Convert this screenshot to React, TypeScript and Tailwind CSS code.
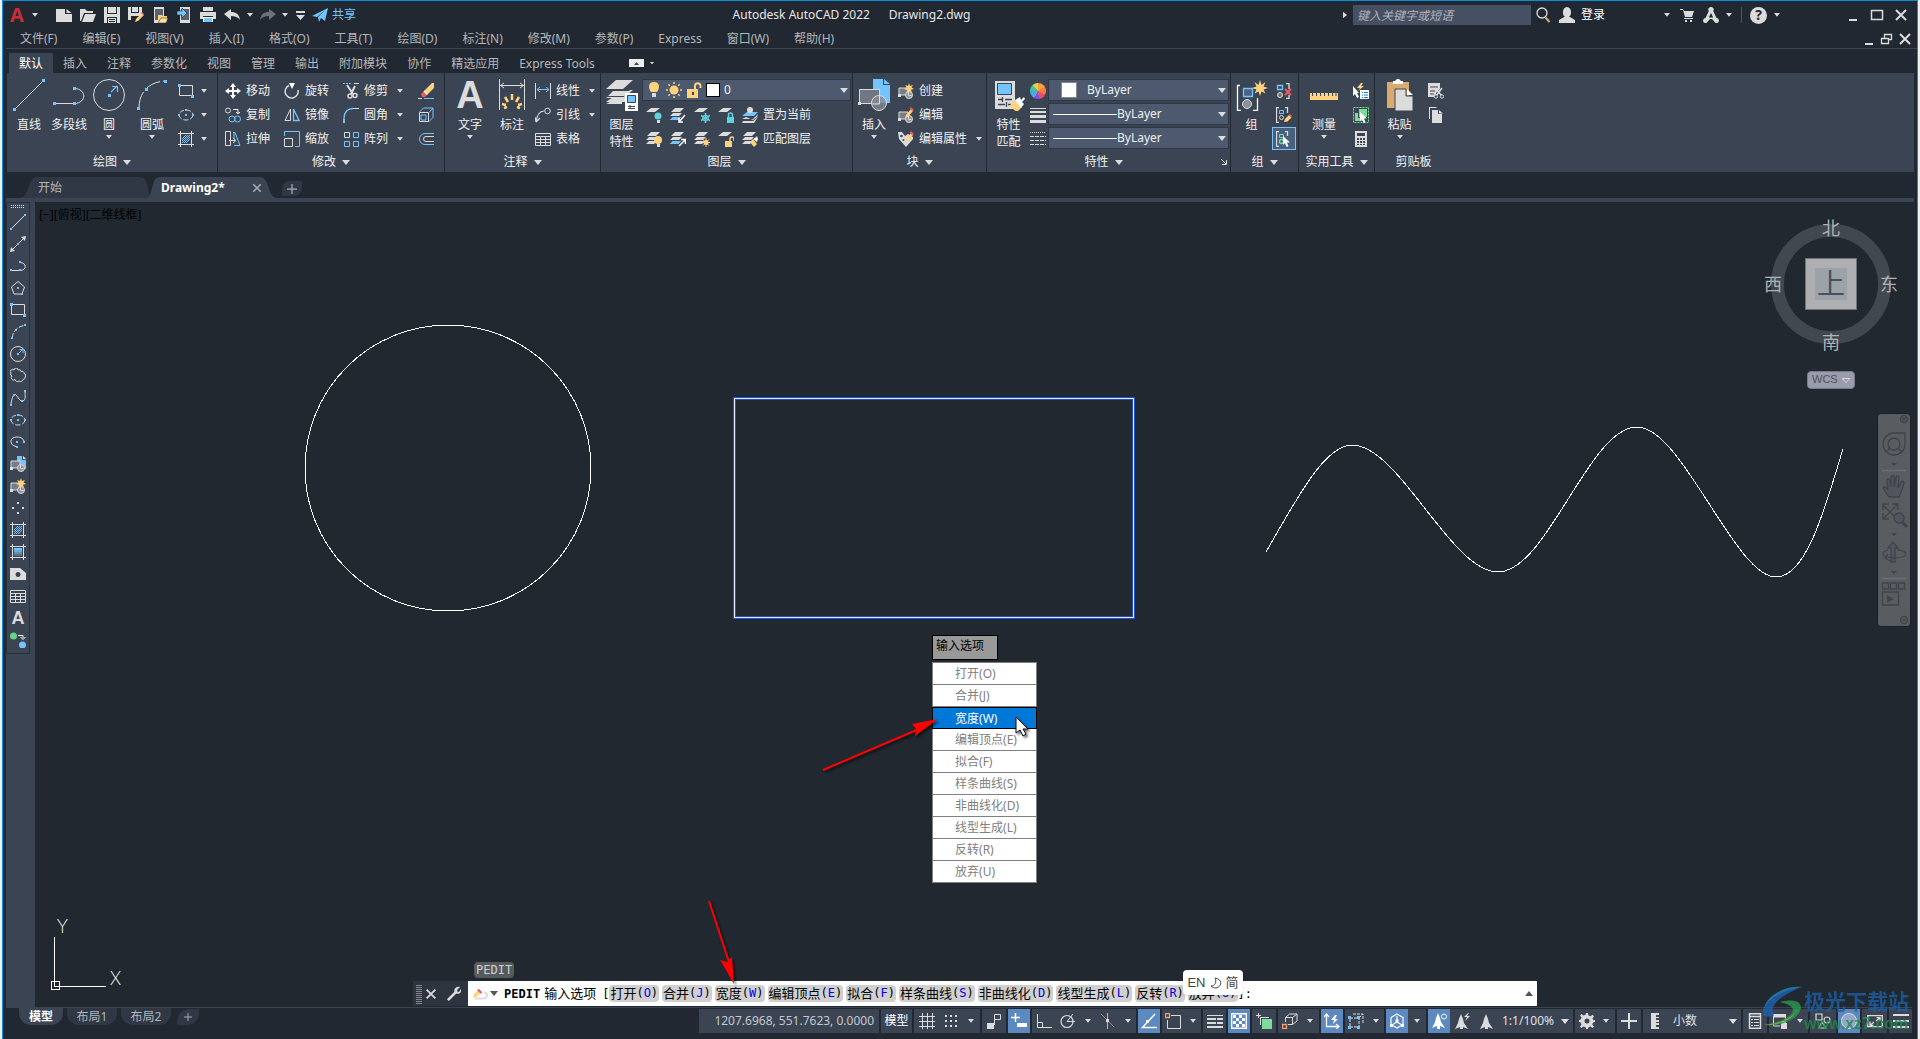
import React from 'react';

const W = '#dcdcdc';
const B = '#74c4ff';
const Y = '#ffd27d';
const T = '#5fd3dc';
const R = '#f0585a';
const G = '#7ddc9b';
const D = '#3b4453';

const stack = <path d="M5 1h9l-4 4H1zM3 6h9l-3 3H0zM3 10h8l-3 3H0z" fill={W} />;
const blockBase = <>
    <path d="M1 5h9v7H1z" fill="#777c88" stroke={W} />
    <path d="M0 11h3v3H0z" fill={W} />
    <circle cx="11" cy="12" r="3.5" fill="#8d929d" stroke={W} />
    <path d="M10.500 9v3.500h3" stroke={W} fill="none" />
  </>;
const pencil = <>
    <path d="M8 8l5-6 2 2-5 6-3 1z" fill={Y} />
    <path d="M13 0l3 3-1.500 1.500-3-3z" fill={R} />
  </>;
const spark = <path d="M11 0l1 3 3-1-1.500 2.500L16 6l-3 .8L14 10l-3-1.800L8.500 10 9 7 6 6l2.600-1.500L7 2l3 1z" fill={Y} />;
const cursor = <path d="M7 5v9l2-2 1.500 4 2-.8L11 11.500h3z" fill="#fff" />;
const hatchFrame = <path d="M2.500 0v16M13.500 0v16M0 2.500h16M0 13.500h16" stroke={W} fill="none" />;

const icons: Record<string, React.ReactNode> = {
  file: <path d="M0 2h9v5h7v8H0zM10.500 2l5 4h-5z" fill={W} />,
  open: <path d="M0 14V2h5l2 2h6v2H4L1 14zM5 7h11l-3 8H2z" fill={W} />,
  save: <>
      <path d="M0 0h16v16H0z" fill={W} />
      <path d="M3 0h10v7H3zM3 10h10v6H3z" fill="#222831" />
      <path d="M4 0h8v6H4zM4 11h8v5H4z" fill={W} />
      <path d="M5 12h6v1H5zM5 14h6v1H5z" fill="#222831" />
    </>,
  saveAs: <>
      <path d="M0 0h14v9H9v4H0z" fill={W} />
      <path d="M3 0h8v6H3zM3 9h6v4H3z" fill="#222831" />
      <path d="M4 0h6v5H4z" fill={W} />
      <path d="M7 15l1-3 6-6 2 2-6 6z" fill={Y} />
      <path d="M13 6l1-1 2 2-1 1z" fill={R} />
    </>,
  mobileOpen: <>
      <path d="M2 0h10v16H2z" fill={W} />
      <path d="M3 2h8v11H3z" fill="#5c626d" />
      <path d="M6 8h4l1 1h4v6H6z" fill={Y} />
      <path d="M9 11h7l-2 5H6z" fill="#ffe0a0" stroke="#222831" strokeWidth=".5" />
    </>,
  mobileSave: <>
      <path d="M4 0h10v16H4z" fill={W} />
      <path d="M5 2h8v11H5z" fill="#5c626d" />
      <path d="M1 4h5V1l5 5-5 5V8H1z" fill={B} stroke="#222831" strokeWidth=".6" />
    </>,
  print: <>
      <path d="M3 0h10v4H3zM0 5h16v7h-3V9H3v3H0z" fill={W} />
      <path d="M3 10h10v5H3z" fill="#fff" />
      <path d="M4 11h8v4H4z" fill={B} />
    </>,
  undo: <path d="M0 7l7-5v3c5 0 8 2 9 8-2-3-5-4-9-4v4z" fill={W} />,
  redo: <path d="M16 7L9 2v3C4 5 1 7 0 13c2-3 5-4 9-4v4z" fill="#6c727c" />,
  customize: <path d="M4 4h9v2H4zM4 8h9l-4.500 5z" fill={W} />,
  plane: <path d="M0 9L16 1l-3 13-4-3-2 4-1-5 7-7-8 7z" fill={B} />,
  search: <>
      <circle cx="7" cy="6" r="5" fill="none" stroke={W} strokeWidth="1.300" />
      <path d="M10.500 10.500l4 4.500" stroke="#d9ab72" strokeWidth="2" />
    </>,
  person: <path d="M8 0c5 0 5 9 2 9.500L16 13v3H0v-3l6-3.500C3 9 3 0 8 0z" fill={W} />,
  cart: <path d="M1 2h3l1 2h10l-2 6H6L4 3H1zM5 11h9v1H5zM6 13h2v2H6zM11 13h2v2h-2z" fill={W} />,
  adsk: <path d="M8 0a2.500 2.500 0 0 1 2.200 4l3.300 7a2.500 2.500 0 1 1-2.300 3.600L9 12H7l-2.200 2.600A2.500 2.500 0 1 1 2.500 11l3.300-7A2.500 2.500 0 0 1 8 0zM8 6l-2.200 4.500h4.400z" fill={W} fillRule="evenodd" />,
  min: <path d="M4 12h8v2H4z" fill={W} />,
  max: <path d="M2.500 3.500h11v9h-11z" fill="none" stroke={W} strokeWidth="1.500" />,
  restore: <path d="M2.500 7.500h7v5h-7zM5.500 7V3.500h7v5H10M2 7.500h8M5 3.500h8" fill="none" stroke={W} strokeWidth="1.300" />,
  close: <path d="M3 3l10 10M13 3L3 13" stroke={W} strokeWidth="2" />,
  rect: <>
      <path d="M1.500 2.500h13v10h-13z" fill="none" stroke={W} />
      <path d="M0 1h3v3H0zM13 12h3v3h-3z" fill={B} />
    </>,
  ellipse: <>
      <ellipse cx="8" cy="8" rx="7" ry="5" fill="none" stroke={W} strokeDasharray="5 2" />
      <path d="M7 2h2v2H7zM0 7h2v2H0zM7 7h2v2H7zM14 7h2v2h-2z" fill={B} />
    </>,
  hatch: <>
      {hatchFrame}
      <path d="M4 8l4-4M4 12l8-8M8 12l4-4M4 10l6-6M6 12l6-6" stroke={B} />
    </>,
  move: <path d="M8 0l3 4H9v3h3V5l4 3-4 3V9H9v3h2l-3 4-3-4h2V9H4v2L0 8l4-3v2h3V4H5z" fill="#fff" />,
  rotate: <>
      <path d="M5 2.500A6.500 6.500 0 1 0 14 7" fill="none" stroke={W} strokeWidth="1.500" />
      <path d="M5 0h6L8 6z" fill="#fff" />
    </>,
  trim: <>
      <path d="M0 .5h9" stroke={B} strokeDasharray="2 1" />
      <path d="M11 .5h5" stroke={W} />
      <path d="M4 2l6 9M12 3l-4 8" stroke={W} strokeWidth="2" />
      <circle cx="7" cy="13" r="2" fill="none" stroke={W} strokeWidth="1.500" />
      <circle cx="12" cy="12.500" r="2" fill="none" stroke={W} strokeWidth="1.500" />
    </>,
  erase: <>
      <path d="M0 15.500h4" stroke={W} />
      <path d="M6 15.500h10" stroke={B} />
      <path d="M6 8l8-8h2v5l-7 7z" fill={Y} />
      <path d="M3 11l3-3 3 4-2 2H4z" fill={R} />
      <path d="M5.500 8.500l1-1 3 3.500-1 1z" fill="#fff" />
    </>,
  copy: <>
      <circle cx="3" cy="3.500" r="2.500" fill="none" stroke={W} />
      <path d="M8 2.500h5V7M11 5l2 2 2-2" fill="none" stroke="#fff" />
      <circle cx="7" cy="12" r="3" fill="none" stroke={B} />
      <circle cx="12.500" cy="12" r="3" fill="none" stroke={B} />
    </>,
  mirror: <>
      <path d="M6.500 2v11.500H1z" fill="none" stroke={W} />
      <path d="M9.500 2v11.500H15z" fill="none" stroke={B} strokeWidth="1.300" />
    </>,
  fillet: <>
      <path d="M1 16v-5C1 5 5 1.500 10 1.500" fill="none" stroke={B} strokeWidth="1.300" />
      <path d="M10 1.500h6M1 12v4" stroke={W} />
    </>,
  box: <>
      <path d="M1.500 5.500h9v9h-9z" fill="none" stroke={W} />
      <path d="M1.500 5l4-4h9.500l-4 4.500M11 14.500l4-4V1M3 8h5v5H3z" fill="none" stroke={B} />
    </>,
  stretch: <>
      <path d="M.5.500h5v14h-5zM4 9.500h6M8 7l3 2.500L8 12" fill="none" stroke={W} />
      <path d="M8 1.500h2L15 14.500H9M9 2v6" fill="none" stroke={B} />
    </>,
  scale: <>
      <path d="M.5 7.500h8v8h-8z" fill="none" stroke={W} />
      <path d="M.5 5V.5h15v15H11" fill="none" stroke={B} />
    </>,
  array: <>
      <path d="M1.500 1.500h5v5h-5z" fill="none" stroke={W} />
      <path d="M10.500 1.500h5v5h-5zM1.500 10.500h5v5h-5zM10.500 10.500h5v5h-5z" fill="none" stroke={B} />
    </>,
  offset: <>
      <path d="M16 2.500H7a5.500 5.500 0 0 0 0 11h9" fill="none" stroke={B} />
      <path d="M16 5.500H8a2.500 2.500 0 0 0 0 5h8" fill="none" stroke={W} />
    </>,
  linear: <>
      <path d="M.5 0v16M15.500 0v16" stroke={W} />
      <path d="M2 6.500h12M5 4L2 6.500 5 9M11 4l3 2.500L11 9" stroke={B} fill="none" />
    </>,
  leader: <>
      <path d="M1 15C2 8 5 4 9 4M1 15l-1-5M1 15l4-4" stroke={W} fill="none" strokeWidth="1.200" />
      <circle cx="12.500" cy="4" r="2.800" stroke={W} fill="none" />
    </>,
  table: <path d="M.5 2.500h15v12H.5zM0 5.500h16M0 8.500h16M0 11.500h16M5.500 5v10M10.500 5v10" stroke={W} fill="none" />,
  bulb: <>
      <path d="M8 0c6 0 6 6 3 10H5C2 6 2 0 8 0z" fill={Y} />
      <path d="M6 11h4v4H6z" fill={W} />
    </>,
  sun: <>
      <circle cx="8" cy="8" r="4.500" fill={Y} />
      <path d="M8 0v2M8 14v2M0 8h2M14 8h2M2.300 2.300l1.500 1.500M12.200 12.200l1.500 1.500M2.300 13.700l1.500-1.500M12.200 3.800l1.500-1.500" stroke={Y} strokeWidth="1.500" />
    </>,
  unlock: <>
      <path d="M1 7h11v9H1z" fill={Y} />
      <path d="M9 8V4a2.500 2.500 0 0 1 5.500 0v2" fill="none" stroke={Y} strokeWidth="2" />
      <path d="M6 10h2v3H6z" fill={D} />
    </>,
  layerOff: <>
      <path d="M5 1h9L9 5H0z" fill={W} />
      <circle cx="12" cy="9" r="3.500" fill={T} />
      <path d="M11 13h3v3h-3z" fill={W} />
    </>,
  layerIso: <>
      {stack}
      <path d="M3 10h8l-3 3H0z" fill={B} />
      <path d="M15 8l-6 7M9 11v4h4" stroke="#fff" strokeWidth="1.500" fill="none" />
    </>,
  layerFreeze: <>
      <path d="M5 1h9L9 5H0z" fill={W} />
      <path d="M11.500 6v10M7 8.500l9 5M7 13.500l9-5" stroke={T} strokeWidth="1.500" />
      <circle cx="11.500" cy="11" r="3" fill="none" stroke={T} />
    </>,
  layerLock: <>
      <path d="M5 1h9L9 5H0z" fill={W} />
      <path d="M9 10h7v6H9z" fill={T} />
      <path d="M10.500 10V8a2 2 0 0 1 4 0v2" fill="none" stroke={T} strokeWidth="1.500" />
    </>,
  layerCurrent: <>
      <path d="M5 5h11l-4 4H0z" fill={B} />
      <circle cx="8" cy="3" r="3" fill={W} />
      <path d="M4 10l-4 2h11l5-5-1 3-4 3zM1 14h10l5-4-4 6H0z" fill={W} />
    </>,
  layerOn: <>
      {stack}
      <circle cx="12" cy="9" r="4" fill={Y} />
      <path d="M11 13h3v3h-3z" fill={W} />
    </>,
  layerUniso: <>
      {stack}
      <path d="M3 10h8l-3 3H0z" fill={B} />
      <path d="M9 15l6-6M11 8.500h4.500V13" stroke="#fff" strokeWidth="1.500" fill="none" />
    </>,
  layerThaw: <>
      {stack}
      <circle cx="12" cy="11.500" r="2.500" fill={Y} />
      <path d="M12 7v9M7.500 11.500H16M9 8.500l6 6M9 14.500l6-6" stroke={Y} />
    </>,
  layerUnlock: <>
      <path d="M5 1h9L9 5H0z" fill={W} />
      <path d="M7 10h7v6H7z" fill={Y} />
      <path d="M12 10V8a2 2 0 0 1 4 0v2" fill="none" stroke={Y} strokeWidth="1.500" />
    </>,
  layerMatch: <>
      {stack}
      <path d="M8 11l3-3 4 5-3 3z" fill={Y} />
      <path d="M11 8l2-1 2-2 1 3-1 3z" fill="#fff" />
    </>,
  create: <>{blockBase}{spark}</>,
  edit: <>{blockBase}{pencil}</>,
  editAttr: <>
      <path d="M0 1h4l3 4 3-2 5 3v2l-7 8-7-8z" fill={W} />
      <circle cx="3.500" cy="5" r="1.300" fill={D} />
      <circle cx="5.500" cy="9" r="1" fill={D} />
      {pencil}
    </>,
  weights: <path d="M0 1h16v1H0zM0 4h16v2H0zM0 8h16v3H0zM0 13h16v3H0z" fill={W} />,
  types: <>
      <path d="M0 1.500h16" stroke={W} strokeDasharray="1 1" />
      <path d="M0 5.500h16M0 9.500h16M0 13.500h16" stroke={W} strokeDasharray="4 1" />
    </>,
  ungroup: <>
      <path d="M1.500 2.500h5v4h-5z" stroke={B} fill="none" strokeWidth="1.300" />
      <circle cx="4" cy="12" r="2.500" fill="#777" stroke={W} />
      <path d="M10 .5h3V6M13 12v3.500h-3" stroke={W} fill="none" strokeWidth="1.300" />
      <path d="M9 6l6 6M15 6l-6 6" stroke={R} strokeWidth="2" />
    </>,
  groupEdit: <>
      <path d="M3 .5H.5v15H3M9 .5h2.500V6" stroke={W} fill="none" strokeWidth="1.300" />
      <path d="M3.500 3.500h4v3h-4z" stroke={B} fill="none" />
      <circle cx="5.500" cy="10.500" r="2" fill="none" stroke={W} />
      <path d="M8 15l1-3 4-4 2.500 2.500-4 4z" fill={Y} />
      <path d="M12.500 8L14 7l2 2-1 1.500z" fill={R} />
    </>,
  groupSelect: <>
      <path d="M3 .5H.5v15H3M9 .5h2.500V5" stroke={W} fill="none" strokeWidth="1.300" />
      <path d="M3.500 3.500h4v3h-4z" stroke={G} fill="none" />
      <circle cx="5.500" cy="10.500" r="2" fill="none" stroke={G} strokeWidth="1.300" />
      {cursor}
    </>,
  quickSelect: <>
      <path d="M7 7h9v9H7z" fill="#fff" />
      <path d="M9 9h1v1H9zM11 9h4v1h-4zM9 11.500h1v1H9zM11 11.500h4v1h-4zM9 14h1v1H9zM11 14h4v1h-4z" fill="#1e78c8" />
      <path d="M8 0L4 5h3L5 8l6-5H8l2-3z" fill={Y} />
      <path d="M0 3v10l2-2 2 4 2-1-2-4h2z" fill="#fff" />
    </>,
  selectAll: <>
      <path d="M.5.500h15v15H.5z" fill="none" stroke={G} strokeDasharray="2 1" />
      <path d="M6 2h8v8H6zM2 6h3v5h5v3H2z" fill={G} />
      {cursor}
    </>,
  calc: <>
      <path d="M2 0h12v16H2z" fill={W} />
      <path d="M4 2h8v3H4zM4 7h2v2H4zM7 7h2v2H7zM10 7h2v2h-2zM4 10h2v2H4zM7 10h2v2H7zM10 10h2v2h-2zM4 13h2v1H4zM7 13h2v1H7zM10 13h2v1h-2z" fill={D} />
    </>,
  cut: <>
      <path d="M0 0h12v6l-4 4v4H0z" fill={W} />
      <path d="M2 4h8M2 8h5M2 11h4" stroke={D} />
      <path d="M7 5l7 8M14 5l-6 8" stroke={W} strokeWidth="1.500" />
      <circle cx="8" cy="13.500" r="1.700" fill={D} stroke={W} />
      <circle cx="14" cy="13.500" r="1.700" fill={D} stroke={W} />
    </>,
  copyClip: <>
      <path d="M1 0h7l1 1H2v11H1z" fill={W} />
      <path d="M4 3h6v4h4v9H4zM11 3l4 3.500h-4z" fill={W} />
    </>,
  line: <>
      <path d="M1 15L15 1" stroke={W} />
      <path d="M0 14h2v2H0zM14 0h2v2h-2z" fill={B} />
    </>,
  xline: <>
      <path d="M2 14L14 2" stroke={W} />
      <path d="M0 16l1-5 4 4zM16 0l-1 5-4-4z" fill={W} />
      <path d="M7 7h2v2H7z" fill={B} />
    </>,
  pline: <>
      <path d="M2 12.500h8M10 4.500c7 0 7 8 0 8" stroke={W} fill="none" />
      <path d="M0 11h2v2H0zM9 3h2v2H9zM9 11h2v2H9z" fill={B} />
    </>,
  polygon: <>
      <path d="M8 1.500L14.500 7 12 14H4L1.500 7z" stroke={W} fill="none" />
      <path d="M7 7h2v2H7zM11 13h2v2h-2z" fill={B} />
    </>,
  arc: <>
      <path d="M2 14C3 7 8 2 15 1.500" stroke={W} fill="none" strokeDasharray="5 1.500" />
      <path d="M1 13h2v2H1zM5 5h2v2H5zM14 0h2v2h-2z" fill={B} />
    </>,
  circle: <>
      <circle cx="8" cy="8" r="7.500" stroke={W} fill="none" />
      <path d="M9 7l3-3M9.500 3.500H13V7" stroke={B} fill="none" />
      <path d="M7 7h2v2H7z" fill={B} />
    </>,
  cloud: <path d="M1 5a2 2 0 0 1 3-3 2 2 0 0 1 4 0 2 2 0 0 1 3 1.500 2 2 0 0 1 3 2 2 2 0 0 1 1 3.500 2 2 0 0 1-2 2.500 2.500 2.500 0 0 1-4 1.500 2.500 2.500 0 0 1-4-1.500A2 2 0 0 1 2 8a2 2 0 0 1-1-3z" stroke={W} fill="none" />,
  spline: <>
      <path d="M1 14C2 7 4 3 6 5s4 7 7 6 2-6 2-9" stroke={W} fill="none" />
      <path d="M0 14h2v2H0zM3 4h2v2H3zM11 10h2v2h-2zM14 0h2v2h-2z" fill={B} />
    </>,
  ellArc: <>
      <path d="M6 12.500C-1 11-1 3 7 3c4 0 7 2 7 5" stroke={W} fill="none" />
      <path d="M6 7h2v2H6zM13 7h2v2h-2zM6 12h2v2H6z" fill={B} />
    </>,
  insert: <>
      <path d="M7 0h5v4h4v9H7z" fill={B} />
      <path d="M13 0l3 3h-3z" fill="#fff" />
      {blockBase}
    </>,
  point: <path d="M7 2h2v2H7zM2 7h2v2H2zM12 7h2v2h-2zM7 12h2v2H7z" fill={W} />,
  gradient: <>
      {hatchFrame}
      <path d="M4 4h8v2H4z" fill="#74c4ff" />
      <path d="M4 6h8v2H4z" fill="#68aada" />
      <path d="M4 8h8v2H4z" fill="#6090b4" />
      <path d="M4 10h8v2H4z" fill="#606f82" />
    </>,
  region: <path d="M0 2h10l6 5v7H0zM8 6a2.500 2.500 0 1 0 .1 0z" fill={W} fillRule="evenodd" />,
  addSel: <>
      <circle cx="3.500" cy="4" r="3.500" fill="#62d483" />
      <circle cx="12.500" cy="13" r="3.500" fill={B} />
      <path d="M8 3.500h5V6M10.500 5l2.500 2.500L15.500 5" stroke="#fff" fill="none" />
    </>,
  wrench: <path d="M15 1l-3 3v2h2l2-3c1 4-2 6-5 5l-8 8-2-2 8-8C8 3 11 0 15 1z" fill={W} />,
  grid: <path d="M3.500 0v16M8.500 0v16M13.500 0v16M0 3.500h16M0 8.500h16M0 13.500h16" stroke={W} />,
  snap: <path d="M2 2h2v2H2zM7 2h2v2H7zM12 2h2v2h-2zM2 7h2v2H2zM7 7h2v2H7zM12 7h2v2h-2zM2 12h2v2H2zM7 12h2v2H7zM12 12h2v2h-2z" fill={W} />,
  infer: <>
      <path d="M8.500 1.500h6v5h-6zM8.500 6v6" fill="none" stroke={W} />
      <path d="M1 10h7v6H1z" fill={W} />
    </>,
  dyn: <>
      <path d="M4.500 0v9M0 4.500h9" stroke="#fff" strokeWidth="1.500" />
      <path d="M6 10h10v4H6z" fill="#fff" />
    </>,
  ortho: <path d="M1.500 1v13.500H16M1.500 9.500h5v5" fill="none" stroke={W} />,
  polar: <>
      <circle cx="7" cy="8.500" r="6" fill="none" stroke={W} strokeWidth="1.200" />
      <path d="M15 8.500H7L13 1" fill="none" stroke={W} />
    </>,
  iso: <>
      <path d="M1 1l13 13" stroke="#e07070" />
      <path d="M7.500 0v16" stroke={G} />
      <path d="M6 6h3v3H6z" fill={W} />
    </>,
  track: <>
      <path d="M14 1L1.500 14.500H16" fill="none" stroke="#fff" strokeWidth="1.500" />
      <path d="M5 7h3v3H5z" fill="#fff" />
    </>,
  osnap: <>
      <path d="M6 2.500h9.500v13h-13V7" fill="none" stroke={W} />
      <path d="M.5.500h4v4h-4z" fill="none" stroke="#f0a070" strokeWidth="1.300" />
    </>,
  lwt: <path d="M0 2h16v1H0zM0 5h9v2H0zM10 5h6v2h-6zM0 9h9v2H0zM10 9h6v2h-6zM0 13h16v2H0z" fill={W} />,
  transp: <>
      <path d="M.7.700h14.600v14.600H.7z" fill="none" stroke="#fff" strokeWidth="1.400" />
      <path d="M2 2h3v3H2zM8 2h3v3H8zM5 5h3v3H5zM11 5h3v3h-3zM2 8h3v3H2zM8 8h3v3H8zM5 11h3v3H5zM11 11h3v3h-3z" fill="#fff" />
    </>,
  cycle: <>
      <path d="M2.500 0v5M0 2.500h5M5 4.500h8M4.500 4v8" stroke={W} fill="none" />
      <path d="M6 6h10v10H6z" fill={G} />
    </>,
  osnap3d: <>
      <path d="M3.500 9V4.500h7v7H6M3.500 4.500l4-3.500H15v7l-4.500 3.500M10.500 4.500L15 1" fill="none" stroke={W} />
      <path d="M.5 11.500h4v4h-4z" fill="none" stroke="#f0a070" strokeWidth="1.300" />
    </>,
  ducs: <>
      <path d="M2.500 14V2M2 13.500h12M0 4l2.500-3L5 4M12 11l3 2.500-3 2.500" fill="none" stroke="#fff" strokeWidth="1.300" />
      <path d="M11 2L7 7h3l-1 4 5-5h-3l2-4z" fill="#fff" />
    </>,
  filter: <>
      <path d="M2 5h9v9H2zM5 1h10v10M11 5l4-4" fill="none" stroke={W} strokeDasharray="3 1" />
      <path d="M0 3h3v3H0zM9 3h3v3H9zM0 13h3v3H0zM9 13h3v3H9z" fill={B} />
    </>,
  gizmo: <>
      <path d="M8 1l6 3.500v7L8 15l-6-3.500v-7zM8 3v6l-5 3M8 9l5 3" fill="none" stroke="#fff" strokeWidth="1.200" />
      <path d="M6.500 6.500h3v3h-3zM1 11h3v3H1zM12 11h3v3h-3z" fill="#fff" />
    </>,
  annoVis: <>
      <path d="M7 0l2 5 1 4 4 6-5-2v3H6v-3l-5 2 3-6 1-4z" fill="#fff" />
      <circle cx="13" cy="3.500" r="2.500" fill="none" stroke="#fff" />
    </>,
  annoAuto: <path d="M7 1l2 5 1 4 4 6-5-2v2H6v-2l-5 2 3-6 1-4zM14 0l-4 4h3l-2 4 5-5h-3l2-3z" fill={W} />,
  anno: <path d="M8 1l2 5 1 4 4 6-5-2v2H7v-2l-5 2 3-6 1-4z" fill={W} />,
  gear: <>
      <path d="M7 0h2l.5 2.500 2 .8 2-1.500 1.500 1.500-1.500 2 .8 2L16 7v2l-2 .6-.7 2L15 13.500 13.500 15l-2-1.500-2 .8L9 16H7l-.5-1.700-2-.8-2 1.500L1 13.500l1.500-2-.8-2L0 9V7l1.700-.5.800-2-1.500-2L2.500 1l2 1.500 2-.8z" fill={W} />
      <circle cx="8" cy="8" r="2.500" fill={D} />
    </>,
  plus: <path d="M7 0h2v7h7v2H9v7H7V9H0V7h7z" fill={W} />,
  ruler: <path d="M4 0h8v2H9v2h3v1H9v2h3v2H9v1h3v2H9v2h3v2H4z" fill={W} />,
  qprops: <>
      <path d="M2.500.700h11v14.600h-11zM2 3.500h12" fill="none" stroke={W} strokeWidth="1.500" />
      <path d="M4 6h2v1H4zM7 6h5v1H7zM4 9h2v1H4zM7 9h5v1H7zM4 12h2v1H4zM7 12h5v1H7z" fill={W} />
    </>,
  lockUi: <>
      <path d="M1 1h13v3H1z" fill={W} />
      <path d="M1.500 2v11H8M13.500 2v5M1 4h13" fill="none" stroke={W} />
      <path d="M9 10h6v6H9zM10 10V8h4v2" fill={W} />
    </>,
  isolate: <>
      <path d="M1 1h6v6H1zM7 9l4 6H4z" fill="none" stroke={W} strokeWidth="1.200" />
      <circle cx="12" cy="7" r="3" fill="none" stroke={W} strokeWidth="1.200" />
    </>,
  hw: <circle cx="8" cy="8" r="7.500" fill="#93a8c8" stroke={W} />,
  clean: <path d="M.7 2.700h14.600v11H.7zM9 8l3.500-3M9.500 4.700H13V8M7 9l-3.500 3M3 8.500v3.800h3.500" fill="none" stroke={W} strokeWidth="1.300" />,
  menu: <path d="M0 1h16v2H0zM0 7h16v2H0zM0 13h16v2H0z" fill={W} />
};

const bigIcons: Record<string, React.ReactNode> = {
  line: <>
      <path d="M3 29L30 2" stroke={W} />
      <path d="M0 29h3v3H0zM29 0h3v3h-3z" fill={B} />
    </>,
  pline: <>
      <path d="M3 24.500h18M21 9.500c13 0 13 15 0 15" stroke={W} fill="none" />
      <path d="M0 23h3v3H0zM20 8h3v3h-3zM20 23h3v3h-3z" fill={B} />
    </>,
  circle: <>
      <circle cx="16" cy="16" r="15.500" stroke={W} fill="none" />
      <path d="M18 13l6-6M19 7.500h5.500V13" stroke={B} strokeWidth="1.200" fill="none" />
      <path d="M15 15h3v3h-3z" fill={B} />
    </>,
  arc: <>
      <path d="M3 29C3 14 12 3 29 2" stroke={W} fill="none" strokeDasharray="17 3" />
      <path d="M1 28h3v3H1zM9 9h3v3H9zM28 1h3v3h-3z" fill={B} />
    </>,
  dim: <>
      <path d="M3.500 0v31M28.500 0v31M4 6.500h24M8 4L4.500 6.500 8 9M24 4l3.500 2.500L24 9" stroke={W} fill="none" />
      <path d="M16 15v6M9 18l3 5M23 18l-3 5M6 25l4 1M26 25l-4 1M11 28l-3 1M21 28l3 1" stroke={Y} strokeWidth="2.500" />
    </>,
  layers: <>
      <path d="M10 1h17L17 10H0zM7 14l-7 5h16l8-8h3l-10 8zM6 22l-6 3h16v-3z" fill={W} />
      <path d="M7 12h17l-7 6H1zM7 18h12v5H0z" fill={W} />
      <path d="M19 14h13v18H19z" fill="#fff" />
      <path d="M21.500 16.500h8v7h-8z" fill={B} stroke={D} />
      <path d="M22 27.500h7M24 26v3M22 29.500h7" stroke={D} />
      <path d="M1 11.500h17l7-6M1 17.500h17" stroke={D} fill="none" />
    </>,
  insert: <>
      <path d="M15 0h10v6h7v18H15z" fill={B} />
      <path d="M26 0l6 5h-6z" fill={B} />
      <path d="M1.500 10.500h20v14h-20z" fill="#717783" stroke={W} />
      <path d="M0 23h3v3H0z" fill={W} />
      <circle cx="21" cy="24" r="7.500" fill="#858b96" fillOpacity=".8" stroke={W} />
      <path d="M21.500 17v8h-7" fill="none" stroke={W} />
    </>,
  match: <>
      <path d="M2 2h20v28H2z" fill={W} />
      <path d="M4.500 4.500h14v11h-14z" fill={B} stroke={D} />
      <path d="M5 20.500h4M12 20.500h7M5 25.500h7M15 25.500h3M9.500 18v5M13.500 23v5" stroke={D} strokeWidth="1.300" />
      <path d="M16 27l7-6 6 7-5 5z" fill={Y} />
      <path d="M22 21l5-3 1 3 3-3 1 2-3 3 2 2-3 4z" fill="#fff" />
    </>,
  group: <>
      <path d="M4 6.500H1.500v25H5M17 31.500h4.500V19" stroke="#fff" fill="none" strokeWidth="1.300" />
      <path d="M7.500 9.500h9v8h-9z" stroke={B} fill="#4b6280" strokeWidth="1.300" />
      <circle cx="11" cy="25" r="4.500" fill="#8b909a" stroke={W} />
      <path d="M24 1l1.500 5 4-3-2 4.500L32 9l-4.500 1.500 2 4-4-2L24 17l-1.500-4.500-4 2 2-4L16 9l4.500-1.500-2-4.500 4 3z" fill={Y} />
    </>,
  measure: <>
      <path d="M2 14h28v7H2z" fill={Y} />
      <path d="M4.500 14v3M8.500 14v3M12.500 14v3M16.500 14v3M20.500 14v3M24.500 14v3M28 14v3" stroke={D} />
    </>,
  paste: <>
      <path d="M3 3h22v26H3z" fill="#d9ab72" />
      <path d="M9 2h2l2-2h2l2 2h2v3H9z" fill="#fff" />
      <path d="M11 10h11v7h7v15H11z" fill={W} stroke={D} />
      <path d="M23 10l6 6h-6z" fill="#fff" />
    </>
};

const Icon = ({ name, className = 'size-4' }: { name: string; className?: string }) =>
  <svg viewBox="0 0 16 16" className={`shrink-0 ${className}`} aria-hidden="true">{icons[name]}</svg>;

const BigIcon = ({ name }: { name: string }) =>
  <svg viewBox="0 0 32 32" className="size-8 shrink-0" aria-hidden="true">{bigIcons[name]}</svg>;

const Caret = ({ className = 'w-1.5' }: { className?: string }) =>
  <svg viewBox="0 0 8 5" className={`shrink-0 ${className}`} aria-hidden="true"><path d="M0 0h8L4 5z" fill={W} /></svg>;

const IconButton = ({ name, label, className = 'w-6' }: { name: string; label: string; className?: string }) =>
  <button aria-label={label} className={`flex h-6 shrink-0 items-center justify-center ${className}`}><Icon name={name} /></button>;

const CaretButton = ({ label, className = 'w-4' }: { label: string; className?: string }) =>
  <button aria-label={label} className={`flex h-6 shrink-0 items-center justify-center ${className}`}><Caret /></button>;

const BigButton = ({ icon, lines, caret = false, className = 'w-10', children }: {
  icon?: string;
  lines: string[];
  caret?: boolean;
  className?: string;
  children?: React.ReactNode;
}) =>
  <button className={`flex shrink-0 flex-col items-center whitespace-nowrap ${className}`}>
    <span className="flex h-[37px] flex-col">{icon ? <BigIcon name={icon} /> : children}</span>
    {lines.map(l => <span key={l} className="h-[17px] leading-[17px]">{l}</span>)}
    {caret && <span className="flex h-2 items-center"><Caret /></span>}
  </button>;

const Tool = ({ icon, label, caret = false }: { icon: string; label: string; caret?: boolean }) =>
  <button className="flex h-6 items-center gap-[5px] whitespace-nowrap">
    <Icon name={icon} />
    {label}
    {caret && <Caret className="ml-1 w-1.5" />}
  </button>;

const Panel = ({ title, className, caret = true, launcher = false, children }: {
  title: string;
  className: string;
  caret?: boolean;
  launcher?: boolean;
  children: React.ReactNode;
}) =>
  <section className={`flex shrink-0 flex-col border-r border-[#222831] ${className}`}>
    <div className="flex h-[78px] pt-1.5">{children}</div>
    <div className="flex h-[21px] items-center justify-center pt-px">
      <button className="flex flex-1 items-center justify-center gap-1.5">
        {title}
        {caret && <Caret className="w-2" />}
      </button>
      {launcher && <button aria-label="特性设置" className="w-2.5"><svg viewBox="0 0 8 8" className="size-2"><path d="M1 1l5 5M6.500 2v4.500H2" stroke={W} fill="none" /></svg></button>}
    </div>
  </section>;

const menus = ['文件(F)', '编辑(E)', '视图(V)', '插入(I)', '格式(O)', '工具(T)', '绘图(D)', '标注(N)', '修改(M)', '参数(P)', 'Express', '窗口(W)', '帮助(H)'];
const ribbonTabs = ['默认', '插入', '注释', '参数化', '视图', '管理', '输出', '附加模块', '协作', '精选应用', 'Express Tools'];
const drawTools = [
  ['line', '直线'], ['xline', '构造线'], ['pline', '多段线'], ['polygon', '多边形'], ['rect', '矩形'],
  ['arc', '圆弧'], ['circle', '圆'], ['cloud', '修订云线'], ['spline', '样条曲线'], ['ellipse', '椭圆'],
  ['ellArc', '椭圆弧'], ['insert', '插入块'], ['create', '创建块'], ['point', '点'], ['hatch', '图案填充'],
  ['gradient', '渐变色'], ['region', '面域'], ['table', '表格'], ['text', '多行文字'], ['addSel', '添加选定对象']
];
const options: [string, string][] = [
  ['打开', 'O'], ['合并', 'J'], ['宽度', 'W'], ['编辑顶点', 'E'], ['拟合', 'F'],
  ['样条曲线', 'S'], ['非曲线化', 'D'], ['线型生成', 'L'], ['反转', 'R'], ['放弃', 'U']
];

const TitleBar = () =>
  <header className="flex h-7 shrink-0 items-center">
    <button aria-label="应用程序菜单" className="flex w-[46px] shrink-0 items-center gap-2 pl-1">
      <span className="text-xl leading-6 font-bold text-[#c62f35]">A</span>
      <Caret />
    </button>
    <IconButton name="file" label="新建" />
    <IconButton name="open" label="打开" />
    <IconButton name="save" label="保存" />
    <IconButton name="saveAs" label="另存为" />
    <IconButton name="mobileOpen" label="从 Web 和 Mobile 中打开" />
    <IconButton name="mobileSave" label="保存到 Web 和 Mobile" />
    <IconButton name="print" label="打印" />
    <IconButton name="undo" label="放弃" />
    <CaretButton label="放弃列表" className="w-3" />
    <IconButton name="redo" label="重做" />
    <CaretButton label="重做列表" className="w-2.5" />
    <IconButton name="customize" label="自定义快速访问工具栏" className="w-5" />
    <button className="ml-0.5 flex w-12 shrink-0 items-center gap-1 whitespace-nowrap text-[#74c4ff]"><Icon name="plane" />共享</button>
    <h1 className="flex-1 text-center whitespace-pre text-[#e6e6e6]">Autodesk AutoCAD 2022      Drawing2.dwg</h1>
    <svg viewBox="0 0 5 8" className="mr-1.5 h-2 w-1"><path d="M0 0l5 4-5 4z" fill={W} /></svg>
    <input aria-label="搜索" placeholder="键入关键字或短语" className="h-5 w-[178px] bg-[#475063] px-1 text-xs italic outline-none placeholder:text-[#aeb3bc]" />
    <IconButton name="search" label="搜索帮助" />
    <button className="ml-1 flex w-[84px] items-center gap-1.5 whitespace-nowrap text-white"><Icon name="person" />登录</button>
    <CaretButton label="登录选项" className="ml-4 w-4" />
    <IconButton name="cart" label="Autodesk App Store" />
    <IconButton name="adsk" label="Autodesk" />
    <CaretButton label="Autodesk 选项" className="w-3" />
    <span className="mr-1 ml-1.5 h-4 w-px bg-[#4d5565]" />
    <button aria-label="帮助" className="mr-0.5 ml-1 size-[17px] rounded-full bg-[#dcdcdc] text-center text-sm leading-4 font-bold text-[#222831]">?</button>
    <CaretButton label="帮助选项" />
    <span className="w-14" />
    <IconButton name="min" label="最小化" />
    <IconButton name="max" label="最大化" />
    <IconButton name="close" label="关闭" className="mr-1 w-6" />
  </header>;

const MenuBar = () =>
  <nav className="flex h-5 shrink-0 items-center gap-[25px] border-b border-[#3b4453] pl-3.5 text-[#b4b7bc]">
    {menus.map(m => <button key={m} className="leading-4 whitespace-nowrap">{m}</button>)}
    <span className="mr-1 ml-auto flex items-center">
      <IconButton name="min" label="最小化图形" className="w-4" />
      <IconButton name="restore" label="还原图形" className="w-5" />
      <IconButton name="close" label="关闭图形" className="w-4" />
    </span>
  </nav>;

const RibbonTabs = () =>
  <nav className="flex h-6 shrink-0 items-end pl-[3px] text-[#b4b7bc]">
    {ribbonTabs.map((t, i) =>
      <button key={t} className={i === 0 ? 'h-5 bg-[#3b4453] px-2.5 pt-px text-white' : 'h-5 px-2.5 pt-px whitespace-nowrap'}>{t}</button>)}
    <button aria-label="最小化功能区" className="ml-6 flex h-5 items-center gap-1.5">
      <svg viewBox="0 0 15 8" className="h-2 w-[15px]"><path d="M0 0h15v8H0z" fill="#eee" /><path d="M5 6l2.500-3L10 6z" fill="#444" /></svg>
      <Caret className="w-1" />
    </button>
  </nav>;

const PropertySelect = ({ label, swatch = false }: { label: string; swatch?: boolean }) =>
  <span className="flex h-[22px] items-center border border-[#2f3744] bg-[#4d596e] pr-0.5">
    {swatch
      ? <span className="mr-2.5 ml-3 size-4 border border-[#888] bg-white" />
      : <span className="ml-1 h-px w-16 bg-white" />}
    <select aria-label={label} className="min-w-0 flex-1 appearance-none bg-transparent leading-5 outline-none"><option>ByLayer</option></select>
    <Caret className="w-2" />
  </span>;

const Ribbon = () =>
  <div className="mr-[3px] ml-px flex h-[99px] shrink-0 bg-[#3b4453] text-[#f0f0f0]">
    <Panel title="绘图" className="w-[211px]">
      <span className="w-0.5" />
      <BigButton icon="line" lines={['直线']} />
      <BigButton icon="pline" lines={['多段线']} />
      <BigButton icon="circle" lines={['圆']} caret />
      <BigButton icon="arc" lines={['圆弧']} caret className="w-[46px]" />
      <div className="flex flex-col pl-[3px]">
        {[['rect', '矩形'], ['ellipse', '椭圆'], ['hatch', '图案填充']].map(([n, l]) =>
          <button key={n} aria-label={l} className="flex h-6 items-center gap-[7px]"><Icon name={n} /><Caret className="w-1.5" /></button>)}
      </div>
    </Panel>
    <Panel title="修改" className="w-[227px]">
      <div className="grid grid-cols-[59px_59px_75px_16px] content-start pl-[7px]">
        <Tool icon="move" label="移动" />
        <Tool icon="rotate" label="旋转" />
        <Tool icon="trim" label="修剪" caret />
        <IconButton name="erase" label="删除" className="w-4" />
        <Tool icon="copy" label="复制" />
        <Tool icon="mirror" label="镜像" />
        <Tool icon="fillet" label="圆角" caret />
        <IconButton name="box" label="分解" className="w-4" />
        <Tool icon="stretch" label="拉伸" />
        <Tool icon="scale" label="缩放" />
        <Tool icon="array" label="阵列" caret />
        <IconButton name="offset" label="偏移" className="w-4" />
      </div>
    </Panel>
    <Panel title="注释" className="w-[156px]">
      <BigButton lines={['文字']} caret className="ml-[3px] w-11">
        <span className="font-['Liberation_Sans',sans-serif] text-[38px] leading-8 font-bold text-[#dcdcdc]">A</span>
      </BigButton>
      <BigButton lines={['标注']} icon="dim" />
      <div className="flex flex-col pl-[3px]">
        <Tool icon="linear" label="线性" caret />
        <Tool icon="leader" label="引线" caret />
        <Tool icon="table" label="表格" />
      </div>
    </Panel>
    <Panel title="图层" className="w-[252px]">
      <BigButton icon="layers" lines={['图层', '特性']} className="w-[41px]" />
      <div className="flex flex-1 flex-col pr-px">
        <span className="mb-0.5 flex h-[22px] items-center border border-[#2f3744] bg-[#4d596e] pr-0.5 pl-[3px]">
          <Icon name="bulb" className="mr-1 size-4" />
          <Icon name="sun" className="mr-1 size-4" />
          <Icon name="unlock" className="mr-1 size-4" />
          <span className="mr-1 size-3.5 border border-black bg-white" />
          <select aria-label="图层" className="min-w-0 flex-1 appearance-none bg-transparent leading-5 outline-none"><option>0</option></select>
          <Caret className="w-2" />
        </span>
        <div className="flex">
          <IconButton name="layerOff" label="关" />
          <IconButton name="layerIso" label="隔离" />
          <IconButton name="layerFreeze" label="冻结" />
          <IconButton name="layerLock" label="锁定" />
          <span className="w-1" /><Tool icon="layerCurrent" label="置为当前" />
        </div>
        <div className="flex">
          <IconButton name="layerOn" label="打开所有图层" />
          <IconButton name="layerUniso" label="取消隔离" />
          <IconButton name="layerThaw" label="解冻所有图层" />
          <IconButton name="layerUnlock" label="解锁" />
          <span className="w-1" /><Tool icon="layerMatch" label="匹配图层" />
        </div>
      </div>
    </Panel>
    <Panel title="块" className="w-[134px]">
      <BigButton icon="insert" lines={['插入']} caret className="w-[42px]" />
      <div className="flex flex-col pl-[3px]">
        <Tool icon="create" label="创建" />
        <Tool icon="edit" label="编辑" />
        <Tool icon="editAttr" label="编辑属性" caret />
      </div>
    </Panel>
    <Panel title="特性" className="w-[244px]" launcher>
      <BigButton icon="match" lines={['特性', '匹配']} className="w-[43px]" />
      <div className="flex w-[18px] flex-col">
        <button aria-label="对象颜色" className="flex h-6 items-center">
          <span className="size-4 rounded-full bg-[conic-gradient(#f9a03f_0_16%,#ff7a45_0_32%,#e8505b_0_48%,#8250e8_0_58%,#4aa8e8_0_74%,#4cc38a_0_88%,#e8d04a_0)]" />
        </button>
        <IconButton name="weights" label="线宽" className="w-4" />
        <IconButton name="types" label="线型" className="w-4" />
      </div>
      <div className="flex flex-1 flex-col gap-0.5 pr-px">
        <PropertySelect label="颜色" swatch />
        <PropertySelect label="线宽" />
        <PropertySelect label="线型" />
      </div>
    </Panel>
    <Panel title="组" className="w-[68px]">
      <BigButton icon="group" lines={['组']} className="w-[41px]" />
      <div className="flex flex-col items-center">
        <IconButton name="ungroup" label="解除编组" />
        <IconButton name="groupEdit" label="组编辑" />
        <button aria-label="启用/禁用组选择" className="flex h-[23px] w-6 items-center justify-center border border-[#74c4ff] bg-[#46607e]"><Icon name="groupSelect" /></button>
      </div>
    </Panel>
    <Panel title="实用工具" className="w-[76px]">
      <BigButton icon="measure" lines={['测量']} caret className="w-[50px]" />
      <div className="flex flex-col">
        <IconButton name="quickSelect" label="快速选择" />
        <IconButton name="selectAll" label="全部选择" />
        <IconButton name="calc" label="快速计算器" />
      </div>
    </Panel>
    <section className="flex w-[77px] flex-col">
      <div className="flex h-[78px] pt-1.5">
        <BigButton icon="paste" lines={['粘贴']} caret className="w-[49px]" />
        <div className="flex flex-col">
          <IconButton name="cut" label="剪切" />
          <IconButton name="copyClip" label="复制" />
        </div>
      </div>
      <div className="h-[21px] pt-px text-center leading-5">剪贴板</div>
    </section>
  </div>;

const FileTabs = () =>
  <nav className="mr-[3px] flex h-[30px] shrink-0 items-end border-b-4 border-[#3b4453] pl-3.5">
    <button className="relative flex h-[21px] w-[130px] items-center pl-[18px] text-[#b4b7bc]">
      <svg viewBox="0 0 130 21" className="absolute inset-0 -z-10 h-[21px] w-[130px]"><path d="M0 21C10 20 7 0 17 0H120c10 0 7 20 12 21z" fill="#303845" /></svg>
      开始
    </button>
    <div className="relative flex h-[21px] w-[124px] items-center pl-[11px] font-bold text-white">
      <svg viewBox="0 0 138 21" className="absolute inset-y-0 -left-1 -z-10 h-[21px] w-[138px]"><path d="M0 21C8 20 4 0 14 0H114c10 0 7 20 17 21z" fill="#3b4453" /></svg>
      <button className="w-[90px] text-left">Drawing2*</button>
      <button aria-label="关闭 Drawing2"><Icon name="close" className="size-3 opacity-70" /></button>
    </div>
    <button aria-label="新图形" className="mb-0.5 ml-2 flex h-[15px] w-5 items-center justify-center rounded-tl-lg rounded-br-lg bg-[#303845]"><Icon name="plus" className="size-2.5 opacity-70" /></button>
  </nav>;

const DrawToolbar = () =>
  <aside className="flex w-[29px] shrink-0 flex-col items-start bg-[#3b4453]">
    <div className="flex w-6 flex-col items-center border border-[#2a313c] pb-0.5">
      <svg viewBox="0 0 14 8" className="h-2 w-3.5"><path d="M0 2.500h14M0 4.500h14" stroke={W} strokeDasharray="1 1" /></svg>
      {drawTools.map(([n, l]) =>
        <button key={l} aria-label={l} className="flex h-[22px] w-full items-center justify-center">
          {n === 'text' ? <span className="font-['Liberation_Sans',sans-serif] text-lg leading-5 font-bold text-[#dcdcdc]">A</span> : <Icon name={n} />}
        </button>)}
    </div>
  </aside>;

const Drawing = () =>
  <svg className="absolute inset-0 h-full w-full" aria-hidden="true">
    <g fill="none" stroke="#fff" shapeRendering="crispEdges">
      <circle cx="413" cy="266" r="143" />
      <path d="M1231 350C1262 296 1290 243 1317 243C1364 243 1416 370 1463 370C1512 370 1554 225 1602 225C1647 225 1700 375 1741 375C1773 375 1792 298 1808 247" />
      <path d="M19.500 735v49h51M16.500 779.500h8v8h-8z" />
    </g>
    <g fill="none" shapeRendering="crispEdges">
      <path d="M699.500 196.500h399v219h-399z" stroke="#2450c8" strokeWidth="3" />
      <path d="M699.500 196.500h399v219h-399z" stroke="#e4ebff" strokeWidth="1" />
    </g>
    <g fill="#fff" fontFamily="Inter, sans-serif" fontSize="18" fontWeight="200" textAnchor="middle">
      <text x="27.500" y="731">Y</text>
      <text x="80.500" y="783">X</text>
    </g>
  </svg>;

const Arrows = () =>
  <svg className="pointer-events-none absolute inset-0 h-full w-full drop-shadow-[2px_2px_1px_#0008]" aria-hidden="true">
    <g fill="#f00">
      <path d="M788 568l96-41" stroke="#f00" strokeWidth="2" />
      <path d="M903 517l-26 5 4 5-1 7z" />
      <path d="M674 699l21 64" stroke="#f00" strokeWidth="2" />
      <path d="M699 782l-14-24 7 2 5-5z" />
    </g>
    <path d="M981 515v16l4-3 3 6 3-2-3-5h5z" fill="#fff" stroke="#000" />
  </svg>;

const ViewCube = () =>
  <div className="absolute top-[7px] right-4 flex w-[134px] flex-col items-center text-lg text-[#b0b2b4]">
    <div className="relative flex w-full flex-col items-center">
      <svg viewBox="0 0 134 134" className="absolute top-[8px] left-0 size-[134px]" aria-hidden="true">
        <circle cx="67" cy="67" r="53.500" fill="none" stroke="#42484f" strokeWidth="13" />
      </svg>
      <button className="relative h-[38px] leading-[36px]">北</button>
      <div className="relative flex h-[74px] w-full items-center justify-between">
        <button>西</button>
        <button className="flex size-[52px] items-center justify-center border border-[#6f7478] bg-[#adafb1]">
          <span className="size-8 bg-[#9ba3a9] text-center text-[28px] leading-[30px] text-[#4a5058]">上</span>
        </button>
        <button>东</button>
      </div>
      <button className="relative h-[42px] leading-[40px]">南</button>
    </div>
    <button className="mt-2 flex h-[18px] w-12 items-center justify-between rounded border border-[#777a88] bg-[#9a9cac] px-1 font-['Liberation_Sans',sans-serif] text-[11px] text-[#50525c]">
      WCS
      <svg viewBox="0 0 8 5" className="w-2"><path d="M0 .5h8L4 4.500z" fill="none" stroke="#d8d8e0" /></svg>
    </button>
  </div>;

const NavBar = () =>
  <div className="absolute top-[211px] right-[3px] flex h-[214px] w-[34px] flex-col rounded border border-[#1b2027] bg-[#585d61]">
    <svg viewBox="0 0 32 212" className="h-[212px] w-8" fill="none" stroke="#3f444b" strokeWidth="1.300" role="img" aria-label="导航栏">
      <circle cx="26" cy="5" r="3.500" />
      <path d="M24 3l4 4M28 3l-4 4M24 206h4" />
      <circle cx="26" cy="206" r="3.500" />
      <path d="M16 19h11v11a11 11 0 1 1-11-11z" />
      <circle cx="16" cy="30" r="6" />
      <path d="M8 38l4-4M24 38l-4-4" />
      <path d="M11 83C8 78 4 74 5 73c2-1 4 1 5 3l-1-10c1-2 3-1 3 1l1 6V63c1-2 3-2 3 0v10l2-10c1-2 3-1 3 1l-1 10 3-6c2-2 3 0 3 1-1 5-3 10-5 14z" fill="#50555f" />
      <path d="M5 91l14 14M19 91L5 105M5 96v-6h6M14 90h6v6M5 99v6h6" />
      <circle cx="21" cy="104" r="5" fill="#50555f" />
      <path d="M24 108l5 5" strokeWidth="3" />
      <path d="M13 148v-14h-3l5-6 5 6h-3v14z" fill="#50555f" />
      <path d="M10 136c-9 3-6 7 5 8 16 0 16-7 5-8M10 140l-3 4 5 3" />
      <path d="M4.500 169h6v6h-6zM12.500 169h6v6h-6zM20.500 169h6v6h-6zM4.500 178h16v13h-16z" />
      <path d="M9 181l7 4-7 4zM13 49h6l-3 3zM13 119h6l-3 3zM13 157h6l-3 3z" fill="#3f444b" stroke="none" />
      <path d="M4 56.500h24M4 164.500h24" stroke="#6b7074" />
    </svg>
  </div>;

const OptionMenu = () =>
  <div className="absolute top-[433px] left-[897px] flex flex-col items-start gap-0.5">
    <div className="h-[25px] w-[66px] border border-black bg-[#999] px-[3px] leading-5 text-black">输入选项</div>
    <ul className="w-[105px] border-t border-[#808080]">
      {options.map(([text, key], i) =>
        <li key={key}>
          <button className={i === 2
          ? 'h-[22px] w-full border border-black bg-[#0078d7] pl-[22px] text-left leading-[19px] text-white'
          : 'h-[22px] w-full border-x border-b border-[#808080] bg-white pl-[22px] text-left leading-5 text-[#808080]'}>
            {text}({key})
          </button>
        </li>)}
    </ul>
  </div>;

const CommandLine = () =>
  <div className="absolute bottom-px left-[378px] flex w-[1124px] flex-col items-start font-['DejaVu_Sans_Mono','Noto_Sans_CJK_SC',monospace]">
    <div className="mb-[3px] ml-[61px] h-4 rounded-sm bg-[#555a5c] px-0.5 leading-4 text-[#d0d0d0]">PEDIT</div>
    <div className="flex h-[25px] w-full">
      <div className="flex w-[55px] shrink-0 items-center bg-[#2d3440]">
        <svg viewBox="0 0 6 20" className="mr-0.5 ml-[3px] h-5 w-1.5"><path d="M1 1v19M3 1v19M5 1v19" stroke={W} strokeDasharray="1 1" /></svg>
        <button aria-label="关闭命令行"><Icon name="close" className="size-3.5" /></button>
        <button aria-label="自定义" className="ml-2"><Icon name="wrench" className="size-[15px]" /></button>
      </div>
      <div className="flex flex-1 items-center overflow-hidden bg-white pl-1 whitespace-nowrap text-black">
        <button aria-label="近期使用的命令" className="flex w-8 items-center gap-0.5">
          <svg viewBox="0 0 16 16" className="size-4"><path d="M3 12.500h9a3 3 0 0 0 0-6" fill="none" stroke="#ddd" strokeWidth="2" /><path d="M1 12l1-4 4-4 3 3-5 4z" fill={Y} /><path d="M5 4l2-1 3 3-1 2z" fill={R} /></svg>
          <svg viewBox="0 0 8 5" className="w-2"><path d="M0 0h8L4 5z" fill="#555" /></svg>
        </button>
        <span className="mr-1 font-bold">PEDIT</span>
        <label htmlFor="cmd" className="mr-1.5 text-[13px]">输入选项</label>
        <span>[</span>
        <span className="flex gap-[3px]">
          {options.map(([text, key]) =>
            <button key={key} className="flex h-[17px] items-center rounded bg-[#d0d0d0] px-px leading-[17px]">
              <span className="text-[13px]">{text}</span>(<span className="text-[#0000e0]">{key}</span>)
            </button>)}
        </span>
        <span>]:</span>
        <input id="cmd" className="h-5 min-w-0 flex-1 bg-transparent outline-none" />
        <svg viewBox="0 0 8 5" className="mr-1 w-2"><path d="M0 5h8L4 0z" fill="#555" /></svg>
      </div>
    </div>
  </div>;

const Status = ({ className, on = false, icon, label, caret = false, children }: {
  className: string;
  on?: boolean;
  icon?: string;
  label?: string;
  caret?: boolean;
  children?: React.ReactNode;
}) =>
  <div className={`flex h-6 shrink-0 items-center justify-center ${on ? 'bg-[#5c89bf]' : 'bg-[#3b4453]'} ${className}`}>
    {icon && <IconButton name={icon} label={label ?? icon} className="w-[22px]" />}
    {caret && <CaretButton label={`${label}选项`} className="w-[17px]" />}
    {children}
  </div>;

const StatusBar = () =>
  <footer className="mr-[5px] flex h-8 shrink-0 items-start border-t border-[#3b4453] text-[#e0e0e0]">
    <nav className="flex h-[17px] flex-1 items-center pl-[13px] text-[#b4b7bc]">
      <button className="h-[17px] w-11 rounded-b-xl bg-[#3b4453] leading-4 font-bold text-white">模型</button>
      <button className="ml-1 h-[17px] w-[50px] rounded-b-xl bg-[#303845] leading-4">布局1</button>
      <button className="ml-1 h-[17px] w-[50px] rounded-b-xl bg-[#303845] leading-4">布局2</button>
      <button aria-label="新建布局" className="ml-1.5 flex h-4 w-[22px] items-center justify-center rounded-tl-xl rounded-br-xl bg-[#303845]"><Icon name="plus" className="size-2 opacity-70" /></button>
    </nav>
    <div className="flex gap-0.5 pt-px">
      <Status className="w-[180px]"><output className="flex-1 pr-[5px] text-right text-[#c4c8ce]">1207.6968, 551.7623, 0.0000</output></Status>
      <Status className="w-[31px]"><button className="text-white">模型</button></Status>
      <Status className="w-[66px]">
        <IconButton name="grid" label="栅格" />
        <IconButton name="snap" label="捕捉模式" />
        <CaretButton label="捕捉选项" />
      </Status>
      <Status className="w-6" icon="infer" label="推断约束" />
      <Status className="w-[22px]" on icon="dyn" label="动态输入" />
      <Status className="w-[104px]">
        <IconButton name="ortho" label="正交" />
        <IconButton name="polar" label="极轴追踪" />
        <CaretButton label="极轴选项" />
        <IconButton name="iso" label="等轴测草图" />
        <CaretButton label="等轴测选项" />
      </Status>
      <Status className="w-[22px]" on icon="track" label="对象捕捉追踪" />
      <Status className="w-[39px]" icon="osnap" label="对象捕捉" caret />
      <Status className="w-[23px]" icon="lwt" label="线宽" />
      <Status className="w-[22px]" on icon="transp" label="透明度" />
      <Status className="w-6" icon="cycle" label="选择循环" />
      <Status className="w-[41px]" icon="osnap3d" label="三维对象捕捉" caret />
      <Status className="w-[22px]" on icon="ducs" label="动态 UCS" />
      <Status className="w-[39px]" icon="filter" label="选择过滤" caret />
      <Status className="w-10">
        <span className="bg-[#5c89bf]"><IconButton name="gizmo" label="小控件" className="w-[22px]" /></span>
        <CaretButton label="小控件选项" className="w-[18px]" />
      </Status>
      <Status className="w-[145px]">
        <span className="bg-[#5c89bf]"><IconButton name="annoVis" label="注释可见性" className="w-[22px]" /></span>
        <IconButton name="annoAuto" label="自动缩放" />
        <IconButton name="anno" label="注释比例" />
        <select aria-label="注释比例" className="ml-1 min-w-0 flex-1 appearance-none bg-transparent outline-none"><option>1:1/100%</option></select>
        <span className="mr-1 flex"><Caret className="w-2" /></span>
      </Status>
      <Status className="w-10" icon="gear" label="切换工作空间" caret />
      <Status className="w-6" icon="plus" label="注释监视器" />
      <Status className="w-[98px]">
        <Icon name="ruler" className="mr-2.5 ml-1 size-4" />
        <select aria-label="单位" className="min-w-0 flex-1 appearance-none bg-transparent outline-none"><option>小数</option></select>
        <span className="mr-1 flex"><Caret className="w-2" /></span>
      </Status>
      <Status className="w-6" icon="qprops" label="快捷特性" />
      <Status className="w-[39px]" icon="lockUi" label="锁定用户界面" caret />
      <Status className="w-[26px]" icon="isolate" label="隔离对象" />
      <Status className="w-[22px]" on icon="hw" label="硬件加速" />
      <Status className="w-[25px]" icon="clean" label="全屏显示" />
      <Status className="w-[23px]" icon="menu" label="自定义" />
    </div>
  </footer>;

const Watermark = () =>
  <div className="pointer-events-none absolute right-2 bottom-1 flex items-center opacity-80" aria-hidden="true">
    <svg viewBox="0 0 44 44" className="mb-1.5 size-11">
      <path d="M42 2C24 0 2 12 3 30c0-12 14-22 39-28z" fill="#2585c4" />
      <path d="M3 30C5 14 20 6 40 3 22 10 8 20 14 31c-6 1-9 1-11-1z" fill="#1f62b0" />
      <path d="M20 17c14-4 24 0 20 9S20 42 4 40c14-2 28-8 29-15 0-4-6-6-13-8z" fill="#2c9a50" />
      <path d="M4 40c14 1 30-6 34-16-4 8-18 15-34 16z" fill="#a8b83a" />
    </svg>
    <div className="flex flex-col">
      <span className="text-[21px] leading-7 font-bold text-[#1d5fa8]">极光下载站</span>
      <span className="font-['Liberation_Sans',sans-serif] text-base leading-[18px] font-bold text-[#1f8a48]">www.xz7.com</span>
    </div>
  </div>;

export default function App() {
  return <div className="h-screen min-h-[700px] bg-[#eef1f4] px-0.5 font-['Noto_Sans','Noto_Sans_CJK_SC',sans-serif] text-xs">
      <div className="relative isolate flex h-full flex-col overflow-hidden border-x border-t border-[#0a8ed6] bg-[#222831] pl-[3px]">
        <TitleBar />
        <MenuBar />
        <RibbonTabs />
        <Ribbon />
        <FileTabs />
        <div className="mr-[3px] flex min-h-0 flex-1">
          <DrawToolbar />
          <main className="relative flex-1 overflow-hidden bg-[#212830]">
            <Drawing />
            <p className="pt-[5px] pl-1 text-black">[−][俯视][二维线框]</p>
            <ViewCube />
            <NavBar />
            <OptionMenu />
            <CommandLine />
            <div className="absolute bottom-3 left-[1148px] flex h-[25px] w-[60px] items-center justify-center gap-1 rounded bg-white font-['Liberation_Sans','Noto_Sans_CJK_SC',sans-serif] text-[13px] text-[#444] shadow">
              EN
              <svg viewBox="0 0 12 12" className="size-3"><path d="M5 1c7 1 8 8 1 10-2 0-4-1-5-2 4 0 6-4 4-8z" fill="none" stroke="#444" /></svg>
              简
            </div>
            <Arrows />
          </main>
        </div>
        <StatusBar />
        <Watermark />
      </div>
    </div>;
}
